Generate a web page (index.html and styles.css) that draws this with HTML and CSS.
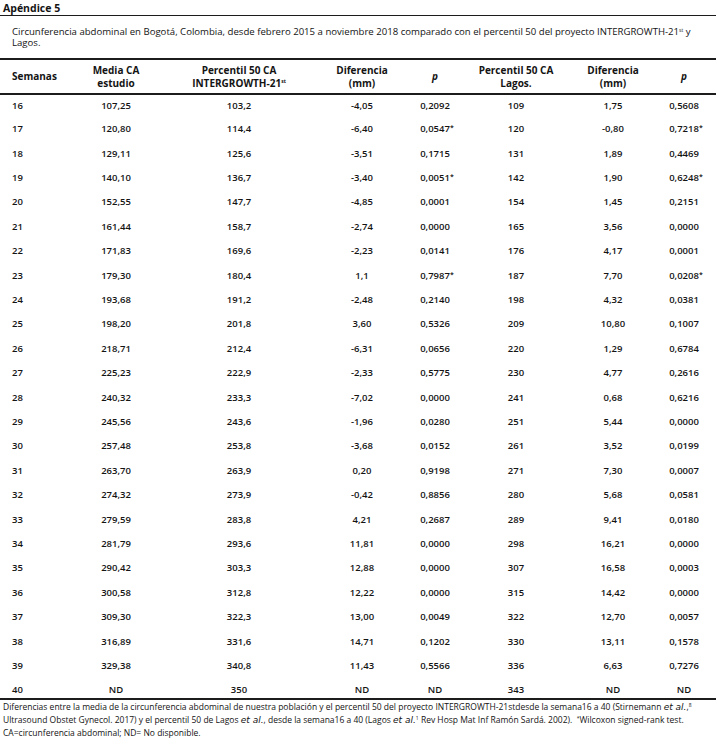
FILE: index.html
```html
<!DOCTYPE html>
<html lang="es">
<head>
<meta charset="utf-8">
<title>Apéndice 5</title>
<link rel="stylesheet" href="styles.css">
</head>
<body>
<div class="page">
  <h1 class="title">Apéndice 5</h1>
  <p class="caption">Circunferencia abdominal en Bogotá, Colombia, desde febrero 2015 a noviembre 2018 comparado con el percentil 50 del proyecto INTERGROWTH-21<sup>st</sup> y<br>Lagos.</p>
  <table class="data">
    <colgroup>
      <col class="c1"><col class="c2"><col class="c3"><col class="c4"><col class="c5"><col class="c6"><col class="c7"><col class="c8">
    </colgroup>
    <thead>
      <tr>
        <th class="left">Semanas</th>
        <th>Media CA<br>estudio</th>
        <th>Percentil 50 CA<br>INTERGROWTH-21<sup>st</sup></th>
        <th>Diferencia<br>(mm)</th>
        <th><i>p</i></th>
        <th>Percentil 50 CA<br>Lagos.</th>
        <th>Diferencia<br>(mm)</th>
        <th><i>p</i></th>
      </tr>
    </thead>
    <tbody>
      <tr><td class="left">16</td><td>107,25</td><td>103,2</td><td>-4,05</td><td>0,2092</td><td>109</td><td>1,75</td><td>0,5608</td></tr>
      <tr><td class="left">17</td><td>120,80</td><td>114,4</td><td>-6,40</td><td>0,0547<span class="ast">*</span></td><td>120</td><td>-0,80</td><td>0,7218<span class="ast">*</span></td></tr>
      <tr><td class="left">18</td><td>129,11</td><td>125,6</td><td>-3,51</td><td>0,1715</td><td>131</td><td>1,89</td><td>0,4469</td></tr>
      <tr><td class="left">19</td><td>140,10</td><td>136,7</td><td>-3,40</td><td>0,0051<span class="ast">*</span></td><td>142</td><td>1,90</td><td>0,6248<span class="ast">*</span></td></tr>
      <tr><td class="left">20</td><td>152,55</td><td>147,7</td><td>-4,85</td><td>0,0001</td><td>154</td><td>1,45</td><td>0,2151</td></tr>
      <tr><td class="left">21</td><td>161,44</td><td>158,7</td><td>-2,74</td><td>0,0000</td><td>165</td><td>3,56</td><td>0,0000</td></tr>
      <tr><td class="left">22</td><td>171,83</td><td>169,6</td><td>-2,23</td><td>0,0141</td><td>176</td><td>4,17</td><td>0,0001</td></tr>
      <tr><td class="left">23</td><td>179,30</td><td>180,4</td><td>1,1</td><td>0,7987<span class="ast">*</span></td><td>187</td><td>7,70</td><td>0,0208<span class="ast">*</span></td></tr>
      <tr><td class="left">24</td><td>193,68</td><td>191,2</td><td>-2,48</td><td>0,2140</td><td>198</td><td>4,32</td><td>0,0381</td></tr>
      <tr><td class="left">25</td><td>198,20</td><td>201,8</td><td>3,60</td><td>0,5326</td><td>209</td><td>10,80</td><td>0,1007</td></tr>
      <tr><td class="left">26</td><td>218,71</td><td>212,4</td><td>-6,31</td><td>0,0656</td><td>220</td><td>1,29</td><td>0,6784</td></tr>
      <tr><td class="left">27</td><td>225,23</td><td>222,9</td><td>-2,33</td><td>0,5775</td><td>230</td><td>4,77</td><td>0,2616</td></tr>
      <tr><td class="left">28</td><td>240,32</td><td>233,3</td><td>-7,02</td><td>0,0000</td><td>241</td><td>0,68</td><td>0,6216</td></tr>
      <tr><td class="left">29</td><td>245,56</td><td>243,6</td><td>-1,96</td><td>0,0280</td><td>251</td><td>5,44</td><td>0,0000</td></tr>
      <tr><td class="left">30</td><td>257,48</td><td>253,8</td><td>-3,68</td><td>0,0152</td><td>261</td><td>3,52</td><td>0,0199</td></tr>
      <tr><td class="left">31</td><td>263,70</td><td>263,9</td><td>0,20</td><td>0,9198</td><td>271</td><td>7,30</td><td>0,0007</td></tr>
      <tr><td class="left">32</td><td>274,32</td><td>273,9</td><td>-0,42</td><td>0,8856</td><td>280</td><td>5,68</td><td>0,0581</td></tr>
      <tr><td class="left">33</td><td>279,59</td><td>283,8</td><td>4,21</td><td>0,2687</td><td>289</td><td>9,41</td><td>0,0180</td></tr>
      <tr><td class="left">34</td><td>281,79</td><td>293,6</td><td>11,81</td><td>0,0000</td><td>298</td><td>16,21</td><td>0,0000</td></tr>
      <tr><td class="left">35</td><td>290,42</td><td>303,3</td><td>12,88</td><td>0,0000</td><td>307</td><td>16,58</td><td>0,0003</td></tr>
      <tr><td class="left">36</td><td>300,58</td><td>312,8</td><td>12,22</td><td>0,0000</td><td>315</td><td>14,42</td><td>0,0000</td></tr>
      <tr><td class="left">37</td><td>309,30</td><td>322,3</td><td>13,00</td><td>0,0049</td><td>322</td><td>12,70</td><td>0,0057</td></tr>
      <tr><td class="left">38</td><td>316,89</td><td>331,6</td><td>14,71</td><td>0,1202</td><td>330</td><td>13,11</td><td>0,1578</td></tr>
      <tr><td class="left">39</td><td>329,38</td><td>340,8</td><td>11,43</td><td>0,5566</td><td>336</td><td>6,63</td><td>0,7276</td></tr>
      <tr class="last"><td class="left">40</td><td>ND</td><td>350</td><td>ND</td><td>ND</td><td>343</td><td>ND</td><td>ND</td></tr>
    </tbody>
  </table>
  <p class="note">Diferencias entre la media de la circunferencia abdominal de nuestra población y el percentil 50 del proyecto INTERGROWTH-21stdesde la semana16 a 40 (Stirnemann <i class="etal">et al.</i>,<sup>8</sup><br>Ultrasound Obstet Gynecol. 2017) y el percentil 50 de Lagos <i class="etal">et al.</i>, desde la semana16 a 40 (Lagos <i class="etal">et al.</i><sup>1</sup> Rev Hosp Mat Inf Ramón Sardá. 2002). &nbsp;<sup>*</sup>Wilcoxon signed-rank test.<br>CA=circunferencia abdominal; ND= No disponible.</p>
</div>
</body>
</html>
```
FILE: styles.css
```css
html, body {
  margin: 0;
  padding: 0;
  background: #ffffff;
}

body {
  font-family: "Open Sans", "Noto Sans", sans-serif;
  color: #141414;
}

.page {
  width: 716px;
}

.title {
  margin: 0;
  padding: 1px 3px 0;
  font-size: 10.5px;
  line-height: 14px;
  font-weight: 700;
  border-bottom: 1px solid #1c1c1c;
}

.caption {
  margin: 10px 0 0;
  padding-left: 12px;
  font-size: 9.6px;
  line-height: 11px;
  white-space: nowrap;
}

.caption sup {
  font-size: 5px;
  vertical-align: 3px;
  line-height: 0;
}

.data {
  margin-top: 10px;
  width: 716px;
  border-collapse: collapse;
  table-layout: fixed;
}

.c1 { width: 66px; }
.c2 { width: 100px; }
.c3 { width: 146px; }
.c4 { width: 100px; }
.c5 { width: 46px; }
.c6 { width: 116px; }
.c7 { width: 78px; }
.c8 { width: 64px; }

.data thead tr {
  border-top: 2px solid #1c1c1c;
  border-bottom: 2px solid #1c1c1c;
}

.data th {
  padding: 4px 0 3.5px;
  font-size: 10px;
  line-height: 12.6px;
  font-weight: 700;
  text-align: center;
  vertical-align: middle;
  white-space: nowrap;
}

.data th sup {
  font-size: 5px;
  vertical-align: 4px;
  line-height: 0;
}

.data td {
  height: 24.42px;
  padding: 5px 0 0;
  box-sizing: border-box;
  font-size: 9.5px;
  line-height: 12px;
  font-weight: 600;
  text-align: center;
  vertical-align: top;
  white-space: nowrap;
}

.data tr.last td {
  height: 19px;
}

.data .left {
  text-align: left;
  padding-left: 12px;
}

.ast {
  display: inline-block;
  width: 0;
  font-size: 7px;
  vertical-align: 2px;
  line-height: 0;
}

.note {
  margin: 0;
  border-top: 2px solid #1c1c1c;
  padding: 1px 0 0 3px;
  font-size: 8.5px;
  line-height: 12.6px;
  white-space: nowrap;
}

.note sup {
  font-size: 5px;
  vertical-align: 3px;
  line-height: 0;
}

.etal {
  font-family: "DejaVu Sans", sans-serif;
  font-size: 9px;
}
```
